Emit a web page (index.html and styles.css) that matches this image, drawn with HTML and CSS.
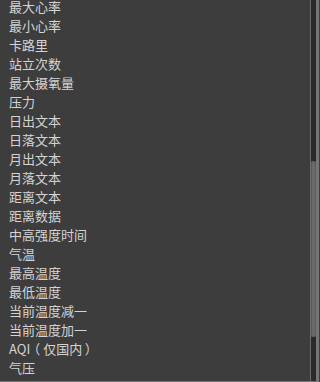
FILE: index.html
```html
<!DOCTYPE html>
<html lang="zh">
<head>
<meta charset="utf-8">
<link rel="stylesheet" href="styles.css">
</head>
<body>
<div class="frame">
  <div class="viewport">
    <ul class="list">
      <li>最大心率</li>
      <li>最小心率</li>
      <li>卡路里</li>
      <li>站立次数</li>
      <li>最大摄氧量</li>
      <li>压力</li>
      <li>日出文本</li>
      <li>日落文本</li>
      <li>月出文本</li>
      <li>月落文本</li>
      <li>距离文本</li>
      <li>距离数据</li>
      <li>中高强度时间</li>
      <li>气温</li>
      <li>最高温度</li>
      <li>最低温度</li>
      <li>当前温度减一</li>
      <li>当前温度加一</li>
      <li>AQI<span class="paren open">（</span>仅国内<span class="paren close">）</span></li>
      <li>气压</li>
      <li>海拔</li>
    </ul>
  </div>
  <div class="scrollbar">
    <div class="thumb"></div>
  </div>
</div>
</body>
</html>
```

FILE: styles.css
```css
html, body {
  margin: 0;
  padding: 0;
  background: #3d3d3d;
}
.frame {
  width: 316px;
  height: 381px;
  display: flex;
  background: #3d3d3d;
  border-right: 3px solid #767676;
  border-bottom: 1px solid #767676;
  overflow: hidden;
}
.viewport {
  flex: 1;
  overflow: hidden;
  border-right: 1px solid #6e6e6e;
}
.list {
  list-style: none;
  margin: -3px 0 0 0;
  padding: 0 0 0 9px;
  font-family: "Noto Sans CJK SC", "Liberation Sans", sans-serif;
  font-size: 13px;
  color: #d4d4d4;
}
.list li {
  height: 19px;
  line-height: 19px;
  white-space: nowrap;
}
.paren {
  font-feature-settings: "halt";
  text-spacing-trim: space-all;
}
.paren.open {
  padding: 0 3px 0 3.5px;
}
.paren.close {
  padding: 0 4px 0 2.5px;
}
.scrollbar {
  width: 5px;
  background: #2a2a2a;
  position: relative;
}
.thumb {
  position: absolute;
  left: 0;
  right: 0;
  top: 161px;
  height: 176px;
  background: #6a6a6a;
  border-radius: 3px;
  box-shadow: inset 0 0 0 1px #5c5c5c;
}
```
